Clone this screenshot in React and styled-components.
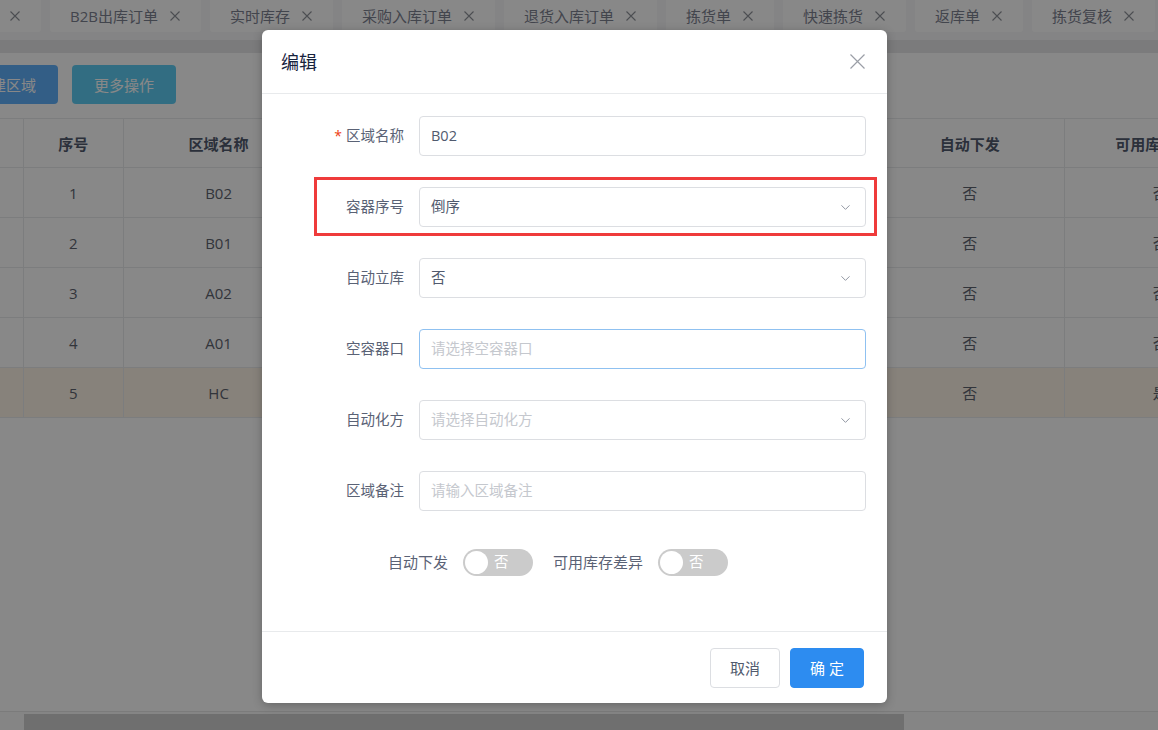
import React from 'react';
import styled, { createGlobalStyle } from 'styled-components';
import { ChevronDown } from 'lucide-react';

const GlobalStyle = createGlobalStyle`
  html, body {
    margin: 0;
    padding: 0;
  }
  body {
    font-family: "Open Sans", "Noto Sans CJK SC", sans-serif;
    background: #fff;
    overflow: hidden;
  }
  * {
    box-sizing: border-box;
  }
`;

const tabs = ['区域管理', 'B2B出库订单', '实时库存', '采购入库订单', '退货入库订单', '拣货单', '快速拣货', '返库单', '拣货复核'];

const columns = [
  { key: 'sel', title: '', width: 23 },
  { key: 'no', title: '序号', width: 100 },
  { key: 'name', title: '区域名称', width: 190 },
  { key: 'order', title: '容器序号', width: 186 },
  { key: 'auto', title: '自动立库', width: 186 },
  { key: 'port', title: '空容器口', width: 187 },
  { key: 'send', title: '自动下发', width: 190 },
  { key: 'diff', title: '可用库存差异', width: 190 },
];

const rows = [
  { no: 1, name: 'B02', send: '否', diff: '否' },
  { no: 2, name: 'B01', send: '否', diff: '否' },
  { no: 3, name: 'A02', send: '否', diff: '否' },
  { no: 4, name: 'A01', send: '否', diff: '否' },
  { no: 5, name: 'HC', send: '否', diff: '是', current: true },
];

const Cross = ({ size = 10, color = '#999', weight = 1.2 }) => (
  <svg width={size} height={size} viewBox={`0 0 ${size} ${size}`} fill="none">
    <path d={`M0.5 0.5L${size - 0.5} ${size - 0.5}M${size - 0.5} 0.5L0.5 ${size - 0.5}`} stroke={color} strokeWidth={weight} />
  </svg>
);

export default function App() {
  return (
    <>
      <GlobalStyle />
      <Page>
        <TabBar>
          {tabs.map((t, i) => (
            <Tab key={t} $shift={i === 0 ? -82 : 0}>
              {t}
              <Cross size={10} color="#8f929a" weight={1.1} />
            </Tab>
          ))}
        </TabBar>
        <TabScroll />
        <Toolbar>
          <ToolButton $variant="primary" $shift={-46}>新建区域</ToolButton>
          <ToolButton $variant="info">更多操作</ToolButton>
        </Toolbar>
        <TableWrap>
          <Table>
            <colgroup>
              {columns.map(c => (
                <col key={c.key} style={{ width: c.width }} />
              ))}
            </colgroup>
            <thead>
              <tr>
                {columns.map(c => (
                  <Th key={c.key}>{c.title}</Th>
                ))}
              </tr>
            </thead>
            <tbody>
              {rows.map(r => (
                <Tr key={r.no} $current={r.current}>
                  <Td />
                  <Td>{r.no}</Td>
                  <Td>{r.name}</Td>
                  <Td>倒序</Td>
                  <Td>否</Td>
                  <Td />
                  <Td>{r.send}</Td>
                  <Td>{r.diff}</Td>
                </Tr>
              ))}
            </tbody>
          </Table>
        </TableWrap>
        <HScroll>
          <HThumb />
        </HScroll>

        <Mask />
        <Dialog>
          <DialogHeader>
            <DialogTitle>编辑</DialogTitle>
            <Cross size={15} color="#9a9ea6" weight={1.2} />
          </DialogHeader>
          <DialogBody>
            <FormItem>
              <FormLabel>
                <Required>*</Required>区域名称
              </FormLabel>
              <Field>B02</Field>
            </FormItem>
            <FormItem $marked>
              <FormLabel>容器序号</FormLabel>
              <Field>
                倒序
                <ChevronDown size={15} strokeWidth={1.5} color="#8a8f9c" />
              </Field>
            </FormItem>
            <FormItem>
              <FormLabel>自动立库</FormLabel>
              <Field>
                否
                <ChevronDown size={15} strokeWidth={1.5} color="#8a8f9c" />
              </Field>
            </FormItem>
            <FormItem>
              <FormLabel>空容器口</FormLabel>
              <Field $focus $placeholder>请选择空容器口</Field>
            </FormItem>
            <FormItem>
              <FormLabel>自动化方</FormLabel>
              <Field $placeholder>
                请选择自动化方
                <ChevronDown size={15} strokeWidth={1.5} color="#8a8f9c" />
              </Field>
            </FormItem>
            <FormItem>
              <FormLabel>区域备注</FormLabel>
              <Field $placeholder>请输入区域备注</Field>
            </FormItem>
            <SwitchRow>
              <SwitchLabel>自动下发</SwitchLabel>
              <Switch>
                <Knob />
                <SwitchText>否</SwitchText>
              </Switch>
              <SwitchLabel $gap>可用库存差异</SwitchLabel>
              <Switch>
                <Knob />
                <SwitchText>否</SwitchText>
              </Switch>
            </SwitchRow>
          </DialogBody>
          <DialogFooter>
            <FooterButton>取消</FooterButton>
            <FooterButton $primary>确 定</FooterButton>
          </DialogFooter>
        </Dialog>
      </Page>
    </>
  );
}

const Page = styled.div`
  position: relative;
  width: 1158px;
  height: 730px;
  overflow: hidden;
  display: flex;
  flex-direction: column;
  background: #fff;
`;

const TabBar = styled.div`
  flex: none;
  height: 40px;
  display: flex;
  align-items: flex-start;
  gap: 9px;
  background: #f8f8f9;
  white-space: nowrap;
`;

const Tab = styled.div`
  flex: none;
  height: 32px;
  margin-left: ${p => p.$shift}px;
  padding: 0 21px 0 20px;
  display: flex;
  align-items: center;
  gap: 12px;
  background: #fff;
  border-radius: 0 0 3px 3px;
  font-size: 15px;
  line-height: 20px;
  color: #7d8190;
`;

const TabScroll = styled.div`
  flex: none;
  height: 13px;
  background: #e6e7e9;
`;

const Toolbar = styled.div`
  flex: none;
  height: 65px;
  padding: 12px 0 14px;
  display: flex;
  gap: 14px;
`;

const ToolButton = styled.button`
  height: 39px;
  margin-left: ${p => p.$shift || 0}px;
  padding: 0 22px;
  border: none;
  border-radius: 4px;
  font-family: inherit;
  font-size: 15px;
  color: #fff;
  background: ${p => (p.$variant === 'primary' ? '#60b1fb' : '#5fcdf3')};
`;

const TableWrap = styled.div`
  flex: 1;
  overflow: hidden;
`;

const Table = styled.table`
  width: 1256px;
  table-layout: fixed;
  border-collapse: collapse;
`;

const Th = styled.th`
  height: 49px;
  padding: 0;
  border-top: 1px solid #e8eaec;
  border-right: 1px solid #e8eaec;
  border-bottom: 1px solid #e8eaec;
  font-size: 15px;
  font-weight: 700;
  color: #515a6e;
  text-align: center;
  white-space: nowrap;
`;

const Tr = styled.tr`
  background: ${p => (p.$current ? '#fdf3e6' : '#fff')};
`;

const Td = styled.td`
  height: 50px;
  padding: 0;
  border-right: 1px solid #e8eaec;
  border-bottom: 1px solid #e8eaec;
  font-size: 15px;
  color: #5e6470;
  text-align: center;
`;

const HScroll = styled.div`
  flex: none;
  height: 19px;
  padding: 2px 0 0 24px;
  border-top: 1px solid #e6e6e6;
  background: #f9f9f9;
`;

const HThumb = styled.div`
  width: 880px;
  height: 16px;
  background: #d0d0d0;
`;

const Mask = styled.div`
  position: absolute;
  inset: 0;
  background: rgba(0, 0, 0, 0.467);
`;

const Dialog = styled.div`
  position: absolute;
  left: 262px;
  top: 30px;
  width: 625px;
  height: 673px;
  display: flex;
  flex-direction: column;
  background: #fff;
  border-radius: 6px;
  box-shadow: 0 2px 10px rgba(0, 0, 0, 0.25);
`;

const DialogHeader = styled.div`
  flex: none;
  height: 64px;
  padding: 0 22px 0 19px;
  display: flex;
  align-items: center;
  justify-content: space-between;
  border-bottom: 1px solid #e8eaec;
`;

const DialogTitle = styled.div`
  font-size: 18px;
  line-height: 24px;
  color: #17233d;
`;

const DialogBody = styled.div`
  flex: 1;
  padding: 22px 21px 0 20px;
  display: flex;
  flex-direction: column;
  gap: 31px;
`;

const FormItem = styled.div`
  position: relative;
  height: 40px;
  display: flex;
  align-items: center;

  &::after {
    content: '';
    display: ${p => (p.$marked ? 'block' : 'none')};
    position: absolute;
    left: 32px;
    right: -11px;
    top: -10px;
    bottom: -9px;
    border: 3px solid #ef3b3b;
    pointer-events: none;
  }
`;

const FormLabel = styled.label`
  flex: none;
  width: 137px;
  padding-right: 15px;
  text-align: right;
  font-size: 14.5px;
  line-height: 20px;
  color: #5a6275;
  white-space: nowrap;
`;

const Required = styled.span`
  margin-right: 4px;
  color: #ed4014;
  font-size: 14px;
`;

const Field = styled.div`
  flex: 1;
  min-width: 0;
  height: 40px;
  padding: 0 12px 0 11px;
  display: flex;
  align-items: center;
  justify-content: space-between;
  border: 1px solid ${p => (p.$focus ? '#8fc1f1' : '#dcdee2')};
  border-radius: 4px;
  font-size: 14.5px;
  line-height: 20px;
  color: ${p => (p.$placeholder ? '#c5c8ce' : '#515a6e')};
`;

const SwitchRow = styled.div`
  height: 40px;
  padding-left: 106px;
  display: flex;
  align-items: center;
`;

const SwitchLabel = styled.span`
  margin: 0 15px 0 ${p => (p.$gap ? 20 : 0)}px;
  font-size: 15px;
  line-height: 20px;
  color: #5a6275;
`;

const Switch = styled.div`
  flex: none;
  width: 70px;
  height: 27px;
  padding: 2px;
  display: flex;
  align-items: center;
  border-radius: 14px;
  background: #cbcbcb;
`;

const Knob = styled.span`
  width: 23px;
  height: 23px;
  border-radius: 50%;
  background: #fff;
`;

const SwitchText = styled.span`
  flex: 1;
  padding-left: 6px;
  text-align: left;
  font-size: 14.5px;
  line-height: 20px;
  color: #fff;
`;

const DialogFooter = styled.div`
  flex: none;
  height: 72px;
  padding: 0 23px 0 0;
  display: flex;
  align-items: center;
  justify-content: flex-end;
  gap: 10px;
  border-top: 1px solid #e8eaec;
`;

const FooterButton = styled.button`
  height: 40px;
  padding: 0 19px;
  border: 1px solid ${p => (p.$primary ? '#2d8cf0' : '#dcdee2')};
  border-radius: 4px;
  font-family: inherit;
  font-size: 15px;
  color: ${p => (p.$primary ? '#fff' : '#515a6e')};
  background: ${p => (p.$primary ? '#2d8cf0' : '#fff')};
`;
